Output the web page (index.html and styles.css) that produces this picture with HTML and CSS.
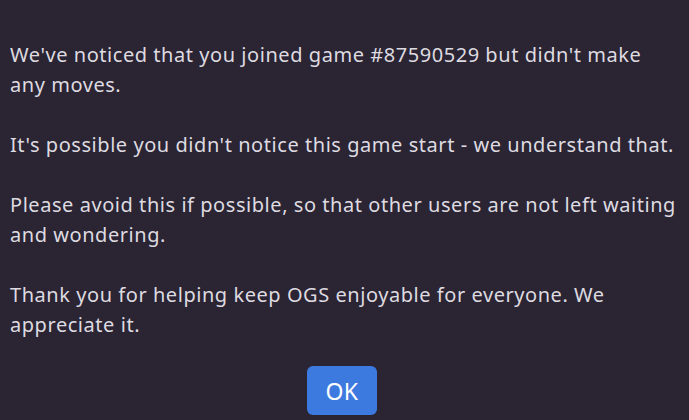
FILE: index.html
```
<!DOCTYPE html>
<html>
<head>
<meta charset="utf-8">
<link rel="stylesheet" href="styles.css">
</head>
<body>
<div class="dialog">
  <div class="message">
    <p>We've noticed that you joined game #87590529 but didn't make any moves.</p>
    <p>It's possible you didn't notice this game start - we understand that.</p>
    <p>Please avoid this if possible, so that other users are not left waiting and wondering.</p>
    <p>Thank you for helping keep OGS enjoyable for everyone. We appreciate it.</p>
  </div>
  <div class="actions">
    <button class="ok">OK</button>
  </div>
</div>
</body>
</html>
```
FILE: styles.css
```
html, body {
  margin: 0;
  padding: 0;
  background: #2a2433;
  height: 100%;
}
.dialog {
  padding: 40px 10px 0 10px;
  font-family: "Noto Sans", sans-serif;
  color: #dedbe0;
}
.message p {
  margin: 0 0 30px 0;
  font-size: 20px;
  line-height: 30px;
  letter-spacing: 0.55px;
}
.message p:last-child {
  margin-bottom: 0;
}
.actions {
  display: flex;
  justify-content: center;
  padding-top: 26px;
  padding-right: 5px;
}
.ok {
  width: 70px;
  height: 49px;
  border: none;
  border-radius: 6px;
  background: #3c7ae0;
  color: #ffffff;
  font-family: "Noto Sans", sans-serif;
  font-size: 23px;
  letter-spacing: 0.5px;
  padding: 0;
}
```
